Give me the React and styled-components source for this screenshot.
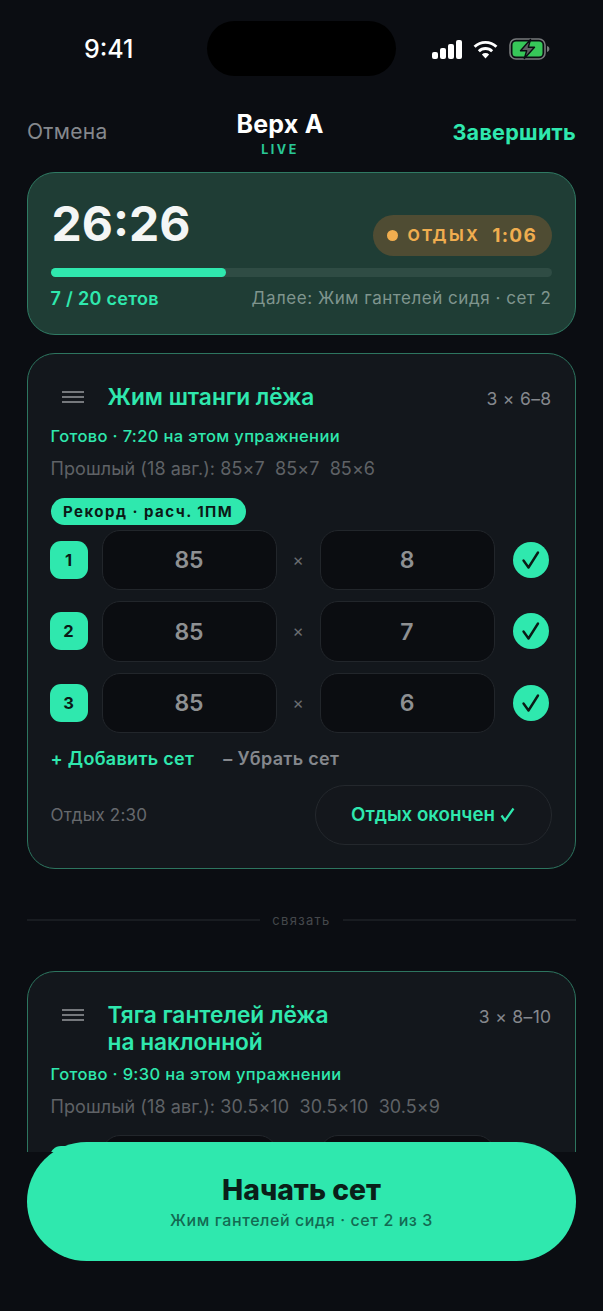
import React from "react";
import styled, { createGlobalStyle } from "styled-components";

const ACCENT = "#2fe8ae";

const GlobalStyle = createGlobalStyle`
  * { box-sizing: border-box; }
  html, body { margin: 0; padding: 0; background: #0b0d12; }
  body { font-family: Inter, "Noto Sans", sans-serif; }
`;

const Screen = styled.div`
  position: relative;
  width: 603px;
  height: 1311px;
  overflow: hidden;
  background: #0b0d12;
`;

const StatusBar = styled.div`
  position: relative;
  height: 98px;
  display: flex;
  justify-content: space-between;
  align-items: center;
  padding: 0 53px 0 84px;
`;

const Clock = styled.span`
  font-size: 25px;
  font-weight: 500;
  color: #fff;
`;

const Island = styled.div`
  position: absolute;
  left: 207px;
  top: 21px;
  width: 189px;
  height: 55px;
  border-radius: 28px;
  background: #000;
`;

const StatusIcons = styled.div`
  display: flex;
  align-items: center;
  gap: 11px;
`;

const Nav = styled.header`
  display: flex;
  justify-content: space-between;
  align-items: flex-start;
  padding: 12px 27px 0;
  height: 74px;
`;

const Cancel = styled.span`
  font-size: 21px;
  line-height: 44px;
  letter-spacing: 0.3px;
  color: #85888d;
`;

const NavCenter = styled.div`
  display: flex;
  flex-direction: column;
  align-items: center;
`;

const NavTitle = styled.span`
  font-size: 25px;
  line-height: 29px;
  font-weight: 700;
  letter-spacing: 0.2px;
  color: #fff;
`;

const LiveTag = styled.span`
  margin-top: 3px;
  font-size: 12.5px;
  line-height: 16px;
  font-weight: 700;
  letter-spacing: 2.5px;
  color: ${ACCENT};
  opacity: 0.85;
`;

const Finish = styled.span`
  font-size: 21.6px;
  line-height: 44px;
  font-weight: 700;
  letter-spacing: 0.25px;
  color: ${ACCENT};
`;

const Scroller = styled.main`
  height: 980px;
  padding: 0 27px;
  overflow: hidden;
`;

const HeroCard = styled.section`
  height: 163px;
  border: 1.5px solid #2f7a63;
  border-radius: 28px;
  background: #1f3d35;
  padding: 0 23.5px 0 22.5px;
`;

const HeroTop = styled.div`
  height: 94px;
  display: flex;
  justify-content: space-between;
  align-items: flex-start;
`;

const Timer = styled.span`
  margin: 22px 0 0 1px;
  font-size: 48px;
  line-height: 58px;
  font-weight: 700;
  color: #f4f6f5;
`;

const RestPill = styled.div`
  width: 179px;
  height: 41px;
  margin-top: 41.5px;
  padding-left: 14px;
  border-radius: 21px;
  background: #4f4c33;
  display: flex;
  align-items: center;
  gap: 10px;
  font-size: 16px;
  font-weight: 700;
  letter-spacing: 2.4px;
  color: #f0ad4f;
`;

const RestDot = styled.span`
  width: 11px;
  height: 11px;
  border-radius: 50%;
  background: #f0ad4f;
`;

const RestTime = styled.span`
  margin-left: 2px;
  font-size: 19px;
  letter-spacing: 1.3px;
`;

const Track = styled.div`
  height: 9px;
  margin-top: 0.5px;
  border-radius: 5px;
  background: #2f4c44;
`;

const Fill = styled.div`
  height: 100%;
  border-radius: 5px;
  background: ${ACCENT};
`;

const HeroBottom = styled.div`
  display: flex;
  justify-content: space-between;
  align-items: center;
  margin-top: 11px;
`;

const SetCount = styled.span`
  font-size: 18px;
  font-weight: 600;
  letter-spacing: 0.3px;
  color: ${ACCENT};
`;

const NextUp = styled.span`
  font-size: 17px;
  letter-spacing: 0.53px;
  color: #7f958e;
`;

const ExerciseCard = styled.section`
  margin-top: 18px;
  border: 1.5px solid #2d755f;
  border-radius: 28px;
  background: #13171c;
  padding: 0 23.5px 0 22.5px;
  height: 516px;
`;

const LinkedCard = styled(ExerciseCard)`
  margin-top: 0;
`;

const CardHead = styled.div`
  display: flex;
  justify-content: space-between;
  align-items: flex-start;
  padding-top: 29px;
`;

const TitleGroup = styled.div`
  display: flex;
  align-items: flex-start;
`;

const Handle = styled.div`
  width: 22px;
  margin: 8px 24px 0 11px;
  display: flex;
  flex-direction: column;
  gap: 3px;

  span {
    height: 2px;
    background: #75787c;
  }
`;

const ExerciseTitle = styled.h2`
  margin: 0;
  font-size: 22.7px;
  line-height: 27px;
  font-weight: 600;
  color: ${ACCENT};
`;

const Scheme = styled.span`
  margin-top: 6px;
  font-size: 17.5px;
  line-height: 20px;
  letter-spacing: 0.35px;
  color: #85888d;
`;

const DoneLine = styled.div`
  margin-top: ${(p) => p.$gap}px;
  font-size: 16.5px;
  line-height: 20px;
  font-weight: 500;
  letter-spacing: 0.35px;
  color: ${ACCENT};
`;

const History = styled.div`
  margin-top: 13px;
  font-size: 18px;
  line-height: 20px;
  letter-spacing: 0.07px;
  color: #5f6266;
  white-space: pre;
`;

const RecordPill = styled.div`
  display: flex;
  align-items: center;
  width: fit-content;
  height: 27px;
  margin-top: 19px;
  padding: 0 12.5px;
  border-radius: 14px;
  background: ${ACCENT};
  color: #0b1a16;
  font-size: 15px;
  font-weight: 700;
  letter-spacing: 1.47px;
`;

const Rows = styled.div`
  display: flex;
  flex-direction: column;
  gap: 11px;
  margin-top: ${(p) => p.$gap}px;
`;

const SetRow = styled.div`
  display: flex;
  align-items: center;
  height: 60.5px;
`;

const SetBadge = styled.div`
  width: 38px;
  height: 38px;
  margin-left: -1px;
  border-radius: 11px;
  background: ${ACCENT};
  display: flex;
  align-items: center;
  justify-content: center;
  font-size: 16.5px;
  font-weight: 700;
  color: #0b1a16;
`;

const ValueBox = styled.div`
  width: 175px;
  height: 60.5px;
  padding-top: 1px;
  border: 1.5px solid #22262b;
  border-radius: 18px;
  background: #0b0d11;
  display: flex;
  align-items: center;
  justify-content: center;
  font-size: 23px;
  font-weight: 600;
  color: #8e9092;
`;

const ValueGroup = styled.div`
  display: flex;
  align-items: center;
  margin-left: 14px;
`;

const Times = styled.span`
  width: 43px;
  text-align: center;
  font-size: 17px;
  color: #6a6d70;
`;

const CheckCircle = styled.div`
  width: 36px;
  height: 36px;
  margin-left: 18px;
  border-radius: 50%;
  background: ${ACCENT};
  display: flex;
  align-items: center;
  justify-content: center;
`;

const SetActions = styled.div`
  display: flex;
  gap: 29px;
  margin-top: 14.5px;
  font-size: 18px;
  line-height: 22px;
  font-weight: 600;
  letter-spacing: 0.3px;
`;

const SetAction = styled.span`
  color: ${(p) => (p.$muted ? "#85888d" : ACCENT)};
`;

const RestRow = styled.div`
  display: flex;
  justify-content: space-between;
  align-items: center;
  margin-top: 15px;
`;

const RestLabel = styled.span`
  font-size: 17px;
  letter-spacing: 0.2px;
  color: #66696d;
`;

const RestDone = styled.div`
  width: 237px;
  height: 60px;
  border: 1.5px solid #24282d;
  border-radius: 30px;
  background: #14171c;
  display: flex;
  align-items: center;
  justify-content: center;
  gap: 5px;
  font-size: 18.7px;
  font-weight: 600;
  color: ${ACCENT};
`;

const Divider = styled.div`
  display: flex;
  align-items: center;
  gap: 12px;
  margin: 41px 0;
  height: 20px;
  font-size: 13px;
  letter-spacing: 1.3px;
  color: #45484c;

  &::before,
  &::after {
    content: "";
    flex: 1;
    height: 1.5px;
    background: #191c21;
  }
`;

const StartButton = styled.button`
  position: absolute;
  left: 27px;
  top: 1142px;
  width: 549px;
  height: 119px;
  border: 0;
  border-radius: 60px;
  background: ${ACCENT};
  display: flex;
  flex-direction: column;
  align-items: center;
  justify-content: center;
  font-family: inherit;
`;

const StartTitle = styled.span`
  font-size: 28.3px;
  line-height: 34px;
  font-weight: 800;
  color: #0a1f19;
`;

const StartSub = styled.span`
  margin-top: 3px;
  font-size: 16px;
  line-height: 20px;
  font-weight: 500;
  letter-spacing: 0.57px;
  color: #136a52;
`;

const SignalIcon = () => (
  <svg width="30" height="19" viewBox="0 0 30 19">
    <rect x="0" y="12" width="6" height="7" rx="2" fill="#fff" />
    <rect x="8" y="8" width="6" height="11" rx="2" fill="#fff" />
    <rect x="16" y="4" width="6" height="15" rx="2" fill="#fff" />
    <rect x="24" y="0" width="6" height="19" rx="2" fill="#fff" />
  </svg>
);

const WifiIcon = () => (
  <svg width="25" height="19" viewBox="0 0 26 20" fill="none">
    <path d="M1.500 7.200a16.500 16.500 0 0 1 23 0" stroke="#fff" strokeWidth="3" />
    <path d="M6 11.800a10 10 0 0 1 14 0" stroke="#fff" strokeWidth="3" />
    <path d="M9.200 15.200 13 19.400l3.800-4.200a5.400 5.400 0 0 0-7.600 0Z" fill="#fff" />
  </svg>
);

const BatteryIcon = () => (
  <svg width="41" height="22" viewBox="0 0 41 22" fill="none">
    <rect x="1" y="1" width="35" height="20" rx="6" stroke="#77797b" strokeWidth="1.600" />
    <rect x="3.500" y="3.500" width="30" height="15" rx="3.500" fill="#37c759" />
    <path d="M38 8c1.600.4 2.400 1.600 2.400 3s-.8 2.600-2.400 3Z" fill="#77797b" />
    <path
      d="M21.500 1.500 11.500 12.800h6.200l-2.400 7.700 10.200-11.300h-6.200Z"
      fill="#5e6062"
      stroke="#0b0d12"
      strokeWidth="1.400"
      strokeLinejoin="round"
    />
  </svg>
);

const CheckIcon = () => (
  <svg width="20" height="20" viewBox="0 0 20 20" fill="none">
    <path
      d="M2.500 10.500 7.500 17.500 17 2.500"
      stroke="#0b1a16"
      strokeWidth="2.400"
      strokeLinecap="round"
      strokeLinejoin="round"
    />
  </svg>
);

const SmallCheck = () => (
  <svg width="15" height="15" viewBox="0 0 15 15" fill="none">
    <path
      d="M1.500 8.500 5 13.500 13.500 1.500"
      stroke={ACCENT}
      strokeWidth="2.200"
      strokeLinejoin="round"
    />
  </svg>
);

const DragHandle = () => (
  <Handle>
    <span />
    <span />
    <span />
  </Handle>
);

const firstSets = [
  { id: 1, weight: 85, reps: 8 },
  { id: 2, weight: 85, reps: 7 },
  { id: 3, weight: 85, reps: 6 },
];

const App = () => {
  return (
    <Screen>
      <GlobalStyle />
      <StatusBar>
        <Clock>9:41</Clock>
        <Island />
        <StatusIcons>
          <SignalIcon />
          <WifiIcon />
          <BatteryIcon />
        </StatusIcons>
      </StatusBar>

      <Nav>
        <Cancel>Отмена</Cancel>
        <NavCenter>
          <NavTitle>Верх А</NavTitle>
          <LiveTag>LIVE</LiveTag>
        </NavCenter>
        <Finish>Завершить</Finish>
      </Nav>

      <Scroller>
        <HeroCard>
          <HeroTop>
            <Timer>26:26</Timer>
            <RestPill>
              <RestDot />
              ОТДЫХ
              <RestTime>1:06</RestTime>
            </RestPill>
          </HeroTop>
          <Track>
            <Fill style={{ width: `${(7 / 20) * 100}%` }} />
          </Track>
          <HeroBottom>
            <SetCount>7 / 20 сетов</SetCount>
            <NextUp>Далее: Жим гантелей сидя · сет 2</NextUp>
          </HeroBottom>
        </HeroCard>

        <ExerciseCard>
          <CardHead>
            <TitleGroup>
              <DragHandle />
              <ExerciseTitle>Жим штанги лёжа</ExerciseTitle>
            </TitleGroup>
            <Scheme>3 × 6–8</Scheme>
          </CardHead>
          <DoneLine $gap={15.5}>Готово · 7:20 на этом упражнении</DoneLine>
          <History>Прошлый (18 авг.): 85×7  85×7  85×6</History>
          <RecordPill>Рекорд · расч. 1ПМ</RecordPill>
          <Rows $gap={5}>
            {firstSets.map((set) => (
              <SetRow key={set.id}>
                <SetBadge>{set.id}</SetBadge>
                <ValueGroup>
                  <ValueBox>{set.weight}</ValueBox>
                  <Times>×</Times>
                  <ValueBox>{set.reps}</ValueBox>
                </ValueGroup>
                <CheckCircle>
                  <CheckIcon />
                </CheckCircle>
              </SetRow>
            ))}
          </Rows>
          <SetActions>
            <SetAction>+ Добавить сет</SetAction>
            <SetAction $muted>– Убрать сет</SetAction>
          </SetActions>
          <RestRow>
            <RestLabel>Отдых 2:30</RestLabel>
            <RestDone>
              Отдых окончен
              <SmallCheck />
            </RestDone>
          </RestRow>
        </ExerciseCard>

        <Divider>связать</Divider>

        <LinkedCard>
          <CardHead>
            <TitleGroup>
              <DragHandle />
              <ExerciseTitle>
                Тяга гантелей лёжа
                <br />
                на наклонной
              </ExerciseTitle>
            </TitleGroup>
            <Scheme>3 × 8–10</Scheme>
          </CardHead>
          <DoneLine $gap={8.5}>Готово · 9:30 на этом упражнении</DoneLine>
          <History>Прошлый (18 авг.): 30.5×10  30.5×10  30.5×9</History>
          {/* the rest of this card sits under the start button */}
          <Rows $gap={18}>
            <SetRow>
              <SetBadge />
              <ValueGroup>
                <ValueBox />
                <Times />
                <ValueBox />
              </ValueGroup>
            </SetRow>
          </Rows>
        </LinkedCard>
      </Scroller>

      <StartButton>
        <StartTitle>Начать сет</StartTitle>
        <StartSub>Жим гантелей сидя · сет 2 из 3</StartSub>
      </StartButton>
    </Screen>
  );
};

export default App;
